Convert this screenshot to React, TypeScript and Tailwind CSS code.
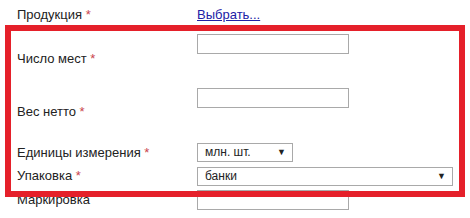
function Req() {
  return <span className="text-[#c9444c]"> *</span>;
}

function TextBox({ className = "" }: { className?: string }) {
  return (
    <input
      type="text"
      className={`h-[20px] w-[152px] border border-[#a9a9a9] bg-white outline-none ${className}`}
    />
  );
}

function Pick({ value, width, className = "" }: { value: string; width: string; className?: string }) {
  return (
    <div
      className={`flex h-[19px] items-center justify-between border border-[#a9a9a9] bg-white pl-[7px] pr-[6px] text-[12px] text-[#222] ${width} ${className}`}
    >
      <span>{value}</span>
      <span className="text-[9px] leading-none">▼</span>
    </div>
  );
}

export default function App() {
  return (
    <div className="relative h-[218px] w-[470px] overflow-hidden bg-white font-['Liberation_Sans',Arial,sans-serif] text-[13px] leading-[15px] text-[#222]">
      <div className="flex flex-col pl-[17px]">
        <div className="flex h-[30px]">
          <div className="w-[180px] pt-[7px]">
            Продукция
            <Req />
          </div>
          <div className="pt-[7px]">
            <a href="#" className="text-[#2121a6] underline">
              Выбрать...
            </a>
          </div>
        </div>

        <div className="flex h-[54px]">
          <div className="w-[180px] pt-[21px]">
            Число мест
            <Req />
          </div>
          <div className="pt-[4px]">
            <TextBox />
          </div>
        </div>

        <div className="flex h-[55px]">
          <div className="w-[180px] pt-[20px]">
            Вес нетто
            <Req />
          </div>
          <div className="pt-[4px]">
            <TextBox />
          </div>
        </div>

        <div className="flex h-[25px]">
          <div className="w-[180px] pt-[6px]">
            Единицы измерения
            <Req />
          </div>
          <div className="pt-[4px]">
            <Pick value="млн. шт." width="w-[96px]" />
          </div>
        </div>

        <div className="flex h-[24px]">
          <div className="w-[180px] pt-[4px]">
            Упаковка
            <Req />
          </div>
          <div className="pt-[3px]">
            <Pick value="банки" width="w-[256px]" />
          </div>
        </div>

        <div className="flex h-[30px]">
          <div className="w-[180px] pt-[4px]">Маркировка</div>
          <div className="pt-[2px]">
            <TextBox />
          </div>
        </div>
      </div>

      {/* red annotation frame drawn over the form */}
      <div className="pointer-events-none absolute left-[5px] top-[25px] h-[172px] w-[460px] border-[6px] border-[#e5202a]" />
    </div>
  );
}
